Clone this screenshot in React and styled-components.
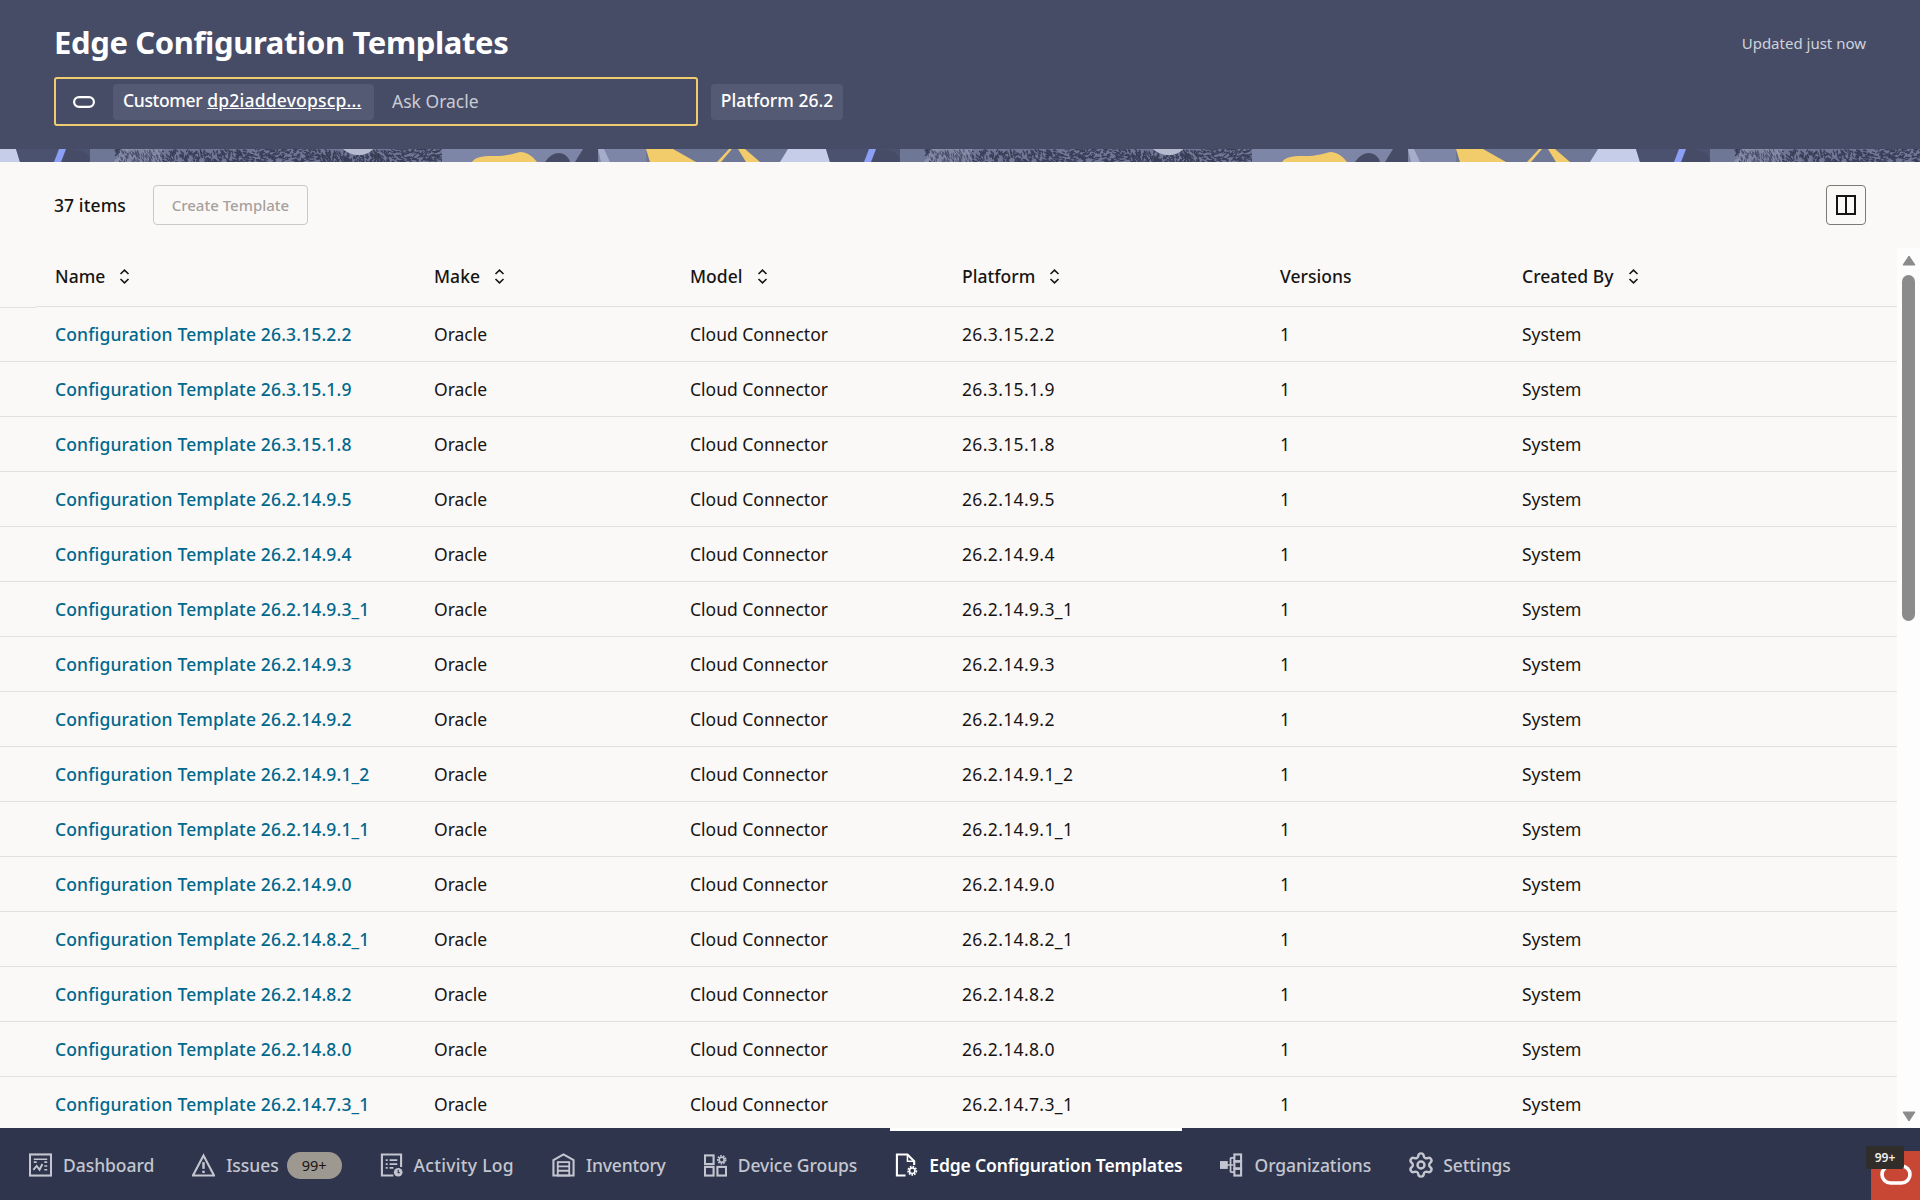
import React from "react";
import styled, { createGlobalStyle } from "styled-components";
import { Settings as SettingsIcon } from "lucide-react";

const Global = createGlobalStyle`
  html, body { margin: 0; padding: 0; height: 100%; overflow: hidden; }
  body { font-family: "Noto Sans", "Open Sans", sans-serif; color: #161513; background: #fbf9f8; }
  #root { height: 100%; }
`;

const Page = styled.div`
  height: 100vh;
  display: flex;
  flex-direction: column;
`;
const Header = styled.header`
  height: 149px;
  flex: none;
  background: #474c66;
  padding: 20px 54px 0;
  box-sizing: border-box;
  display: flex;
  justify-content: space-between;
  align-items: flex-start;
`;
const HeaderLeft = styled.div`
  display: flex;
  flex-direction: column;
  gap: 13px;
`;
const Title = styled.h1`
  margin: 0;
  font-size: 31px;
  line-height: 44px;
  font-weight: 700;
  color: #fff;
  letter-spacing: -0.38px;
`;
const Updated = styled.div`
  font-size: 15px;
  line-height: 46px;
  color: #d0d2dc;
`;
const SearchLine = styled.div`
  display: flex;
  align-items: center;
  gap: 13px;
`;
const SearchBox = styled.div`
  width: 644px;
  height: 49px;
  box-sizing: border-box;
  border: 2px solid #f0cc71;
  border-radius: 3px;
  display: flex;
  align-items: center;
  padding-left: 17px;
  color: #fff;
`;
const Chip = styled.div`
  height: 36px;
  background: #555a74;
  border-radius: 4px;
  display: flex;
  align-items: center;
  box-sizing: border-box;
  font-size: 17.5px;
  font-weight: 500;
  padding-bottom: 3px;
  color: #fff;
  white-space: nowrap;
`;
const CustomerChip = styled(Chip)`
  width: 261px;
  padding-left: 10px;
  margin-left: 18px;
  gap: 5px;
  letter-spacing: -0.35px;
`;
const PlatformChip = styled(Chip)`
  width: 132px;
  justify-content: center;
`;
const Under = styled.span`
  text-decoration: underline;
  letter-spacing: 0.2px;
`;
const Ask = styled.span`
  margin-left: 18px;
  font-size: 17.5px;
  padding-bottom: 1px;
  color: #c9cbd4;
`;
const StripSvg = styled.svg`
  display: block;
  flex: none;
  width: 100%;
  height: 13px;
`;
const Main = styled.main`
  flex: 1;
  min-height: 0;
  display: flex;
  flex-direction: column;
  background: #fbf9f8;
`;
const Toolbar = styled.div`
  height: 86px;
  flex: none;
  box-sizing: border-box;
  padding: 23px 54px;
  display: flex;
  align-items: center;
`;
const Count = styled.span`
  font-size: 17.5px;
  font-weight: 500;
  letter-spacing: 0.1px;
  color: #161513;
  margin-right: 27px;
  padding-bottom: 1px;
`;
const DisabledButton = styled.button`
  width: 155px;
  height: 40px;
  box-sizing: border-box;
  background: transparent;
  border: 1px solid #cbc8c5;
  border-radius: 4px;
  font: inherit;
  font-size: 15px;
  font-weight: 500;
  color: #a6a19c;
  padding: 0;
`;
const ColumnsButton = styled.button`
  margin-left: auto;
  width: 40px;
  height: 40px;
  box-sizing: border-box;
  background: transparent;
  border: 1px solid #7d7975;
  border-radius: 4px;
  padding: 0;
  display: flex;
  align-items: center;
  justify-content: center;
`;
const TableArea = styled.div`
  flex: 1;
  min-height: 0;
  display: flex;
`;
const Table = styled.div`
  flex: 1;
  overflow: hidden;
  min-width: 0;
`;
const cols = "434px 256px 272px 318px 242px 1fr";
const HeadRow = styled.div`
  position: relative;
  display: grid;
  grid-template-columns: ${cols};
  height: 59px;
  box-sizing: border-box;
  border-bottom: 1px solid #e3e1df;
  align-items: center;
  font-size: 17.5px;
  font-weight: 500;
  padding-bottom: 3px;
  &::before {
    content: "";
    position: absolute;
    left: 0;
    width: 36px;
    bottom: -1px;
    height: 1px;
    background: #fbf9f8;
  }
  &::after {
    content: "";
    position: absolute;
    left: 0;
    width: 36px;
    bottom: -2px;
    height: 1px;
    background: #e3e1df;
  }
`;
const HeadCell = styled.div`
  display: flex;
  align-items: center;
  gap: 14px;
  padding-left: ${p => (p.$first ? "55px" : "0")};
  letter-spacing: 0.05px;
  & > svg { position: relative; top: 1px; }
`;
const Row = styled.div`
  display: grid;
  grid-template-columns: ${cols};
  height: 55px;
  box-sizing: border-box;
  border-bottom: 1px solid #e3e1df;
  align-items: center;
  font-size: 17.5px;
`;
const Cell = styled.div`
  padding-left: ${p => (p.$first ? "55px" : "0")};
  white-space: nowrap;
`;
const Version = styled(Cell)`
  letter-spacing: 0.36px;
`;
const NameLink = styled.a`
  color: #00688c;
  font-weight: 500;
  letter-spacing: 0.15px;
  text-decoration: none;
`;
const ScrollTrack = styled.div`
  width: 23px;
  flex: none;
  background: #fdfdfd;
  display: flex;
  flex-direction: column;
  align-items: center;
  padding: 7px 0 6px;
  box-sizing: border-box;
`;
const Thumb = styled.div`
  width: 13px;
  height: 346px;
  margin: 9px 0 auto;
  border-radius: 7px;
  background: #8b8b8b;
`;
const Nav = styled.nav`
  position: relative;
  flex: none;
  height: 72px;
  background: #2f354c;
  display: flex;
  align-items: stretch;
  gap: 38px;
  padding-left: 29px;
  box-sizing: border-box;
`;
const NavItem = styled.div`
  position: relative;
  display: flex;
  align-items: center;
  gap: 11px;
  padding-top: 2px;
  font-size: 17.5px;
  font-weight: ${p => (p.$active ? 600 : 500)};
  letter-spacing: ${p => p.$tracking || "-0.06px"};
  color: ${p => (p.$active ? "#fff" : "#c3c6d0")};
  white-space: nowrap;
  ${p => p.$active && `
    &::before {
      content: "";
      position: absolute;
      left: -5px;
      right: 0;
      top: 0;
      height: 3px;
      background: #fff;
    }
  `}
`;
const Count99 = styled.span`
  width: 55px;
  height: 27px;
  margin-left: -3px;
  border-radius: 14px;
  background: #9e9990;
  color: #161513;
  font-size: 14.5px;
  font-weight: 400;
  display: flex;
  align-items: center;
  justify-content: center;
`;
const OracleCorner = styled.div`
  position: absolute;
  right: 0;
  bottom: 0;
  width: 49px;
  height: 49px;
  background: #c74634;
`;
const CornerBadge = styled.div`
  position: absolute;
  left: 1866px;
  top: 18px;
  width: 38px;
  height: 23px;
  border-radius: 3px;
  background: #312d2a;
  color: #f1efed;
  font-size: 12px;
  font-weight: 600;
  display: flex;
  align-items: center;
  justify-content: center;
`;
const CornerRing = styled.svg`
  position: absolute;
  left: 9px;
  top: 13px;
`;
const GearWrap = styled.span`
  display: flex;
  flex: none;
  width: 23px;
  justify-content: center;
`;

const Sort = () => (
  <svg width="11" height="15" viewBox="0 0 11 15" fill="none" stroke="#161513" strokeWidth="1.6">
    <path d="M1.5 5 5.5 1.2 9.5 5" />
    <path d="M1.5 10 5.5 13.8 9.5 10" />
  </svg>
);
const OracleMark = () => (
  <svg width="22" height="12" viewBox="0 0 22 12" fill="none" stroke="#fff" strokeWidth="2.2">
    <rect x="1.1" y="1.1" width="19.8" height="9.8" rx="4.9" />
  </svg>
);
const ColumnsIcon = () => (
  <svg width="20" height="20" viewBox="0 0 20 20" fill="none" stroke="#161513" strokeWidth="2">
    <rect x="1" y="1" width="18" height="18" />
    <path d="M10 1v18" />
  </svg>
);
const Arrow = ({ down }) => (
  <svg width="14" height="11" viewBox="0 0 14 11" fill="#8b8b8b" stroke="#8b8b8b" strokeWidth="1" strokeLinejoin="round">
    <path d={down ? "M1 1h12L7 10z" : "M7 1 13 10H1z"} />
  </svg>
);
const MiniGear = ({ cx, cy, r = 2.6 }) => (
  <g>
    <circle cx={cx} cy={cy} r={r + 1.4} fill="none" stroke="currentColor" strokeWidth="2" strokeDasharray="1.7 1.1" />
    <circle cx={cx} cy={cy} r={r} fill="none" stroke="currentColor" strokeWidth="1.6" />
  </g>
);
const Ico = ({ children }) => (
  <svg width="23" height="24" viewBox="0 0 24 24" fill="none" stroke="currentColor" strokeWidth="2.2" style={{ flex: "none" }}>
    {children}
  </svg>
);
const DashboardIcon = () => (
  <Ico>
    <rect x="1" y="1" width="22" height="22" />
    <path d="M5 6h14M5 9h3M16 9h3M16 13h3M16 17h3" strokeWidth="1.7" />
    <path d="M4.5 17 8 13l3 4 3-6" strokeWidth="2" />
  </Ico>
);
const IssuesIcon = () => (
  <Ico>
    <path d="M12 2 23 23H1z" strokeLinejoin="miter" />
    <path d="M12 9v7" strokeWidth="2.6" />
    <path d="M12 18v2.4" strokeWidth="2.6" />
  </Ico>
);
const ActivityIcon = () => (
  <Ico>
    <path d="M14 23H2V1h20v13" />
    <path d="M6 7h2M10 7h8M6 11h2M10 11h8M6 15h2M10 15h4" strokeWidth="1.9" />
    <circle cx="19" cy="19.5" r="4.5" fill="currentColor" stroke="none" />
    <path d="M19 17v3h1.6" stroke="#2f354c" strokeWidth="1.2" />
  </Ico>
);
const InventoryIcon = () => (
  <Ico>
    <path d="M1.5 7 12 1l10.5 6v16h-21z" />
    <rect x="6" y="9" width="12" height="14" strokeWidth="1.9" />
    <path d="M6 13.5h12M6 18h12" strokeWidth="1.9" />
  </Ico>
);
const GroupsIcon = () => (
  <Ico>
    <rect x="1" y="2" width="9" height="9" />
    <rect x="1" y="14" width="9" height="9" />
    <rect x="14" y="14" width="9" height="9" />
    <MiniGear cx={18.5} cy={6.5} />
  </Ico>
);
const EdgeIcon = () => (
  <Ico>
    <path d="M11 23H2V1h11l7 7v4" />
    <path d="M13 1v7h7" strokeWidth="1.6" />
    <MiniGear cx={18} cy={18} r={2.8} />
  </Ico>
);
const OrgIcon = () => (
  <Ico>
    <rect x="1" y="9" width="6" height="6" fill="currentColor" />
    <path d="M7 12h7M11 4.5v15M11 4.5h4M11 19.5h4" strokeWidth="1.8" />
    <rect x="15" y="1" width="7" height="7" />
    <rect x="15" y="8.5" width="7" height="7" />
    <rect x="15" y="16" width="7" height="7" />
  </Ico>
);

const rows = [
  "26.3.15.2.2", "26.3.15.1.9", "26.3.15.1.8", "26.2.14.9.5", "26.2.14.9.4",
  "26.2.14.9.3_1", "26.2.14.9.3", "26.2.14.9.2", "26.2.14.9.1_2", "26.2.14.9.1_1",
  "26.2.14.9.0", "26.2.14.8.2_1", "26.2.14.8.2", "26.2.14.8.0", "26.2.14.7.3_1",
];

const dashes = (() => {
  let s = 12345;
  const rnd = () => ((s = (s * 1103515245 + 12345) & 0x7fffffff) / 0x7fffffff);
  const out = [];
  for (let i = 0; i < 1000; i++) {
    const x = 114 + rnd() * 330;
    const y = rnd() * 13;
    const a = rnd() * 1.2 + Math.sin(x / 25);
    out.push(`M${x.toFixed(1)} ${y.toFixed(1)}l${(Math.cos(a) * 3.2).toFixed(1)} ${(Math.sin(a) * 3.2).toFixed(1)}`);
  }
  return out.join("");
})();
const lightDashes = (() => {
  let s = 777;
  const rnd = () => ((s = (s * 1103515245 + 12345) & 0x7fffffff) / 0x7fffffff);
  const out = [];
  for (let i = 0; i < 110; i++) {
    const x = 118 + rnd() * 44;
    const y = rnd() * 13;
    out.push(`M${x.toFixed(1)} ${y.toFixed(1)}l${(rnd() * 1.5).toFixed(1)} 3`);
  }
  return out.join("");
})();

const Strip = () => (
  <StripSvg viewBox="0 0 1920 13" preserveAspectRatio="none">
    <defs>
      <pattern id="tile" patternUnits="userSpaceOnUse" width="810" height="13">
        <rect width="810" height="13" fill="#6f7796" />
        <path d="M0 0h16l4 13H0zM788 0h22v13h-30z" fill="#c5cde8" />
        <path d="M16 0h74v13H20z" fill="#4a5270" />
        <path d="M66 0c18 0 24 5 24 13H62z" fill="#474c66" />
        <path d="M59 0h7l-5 13h-7z" fill="#8c9ef5" />
        <path d="M122 0h320v13H114z" fill="#6f7696" />
        <path d={dashes} stroke="#393e57" strokeWidth="1.2" fill="none" />
        <path d="M122 0h40v13h-48z" fill="#9096b2" opacity="0.8" />
        <path d={lightDashes} stroke="#474c66" strokeWidth="0.9" fill="none" />
        <path d="M343 0h30c-3 4-9 6-14 6s-12-2-16-6z" fill="#b6bbd0" />
        <path d="M442 0h204v13H442z" fill="#7d86a6" />
        <path d="M472 13c4-6 14-6 24-6 10 0 16-2 24-4 8 0 14 6 17 10z" fill="#f2cc6b" />
        <path d="M545 13c4-6 9-9 14-9s10 4 11 9z" fill="#474c66" />
        <path d="M583 0h15v13h-23z" fill="#474c66" />
        <path d="M598 0h6l6 13h-9z" fill="#a5adca" />
        <path d="M646 0h27l23 13h-46z" fill="#f2cc6b" />
        <path d="M729 0h3l-11 13h-4z" fill="#f2cc6b" />
        <path d="M738 0h7l15 13h-14z" fill="#f2cc6b" />
      </pattern>
    </defs>
    <rect width="1920" height="13" fill="url(#tile)" />
  </StripSvg>
);

export default function App() {
  return (
    <Page>
      <Global />
      <Header>
        <HeaderLeft>
          <Title>Edge Configuration Templates</Title>
          <SearchLine>
            <SearchBox>
              <OracleMark />
              <CustomerChip>Customer <Under>dp2iaddevopscp...</Under></CustomerChip>
              <Ask>Ask Oracle</Ask>
            </SearchBox>
            <PlatformChip>Platform 26.2</PlatformChip>
          </SearchLine>
        </HeaderLeft>
        <Updated>Updated just now</Updated>
      </Header>
      <Strip />
      <Main>
        <Toolbar>
          <Count>37 items</Count>
          <DisabledButton disabled>Create Template</DisabledButton>
          <ColumnsButton><ColumnsIcon /></ColumnsButton>
        </Toolbar>
        <TableArea>
          <Table>
            <HeadRow>
              <HeadCell $first>Name <Sort /></HeadCell>
              <HeadCell>Make <Sort /></HeadCell>
              <HeadCell>Model <Sort /></HeadCell>
              <HeadCell>Platform <Sort /></HeadCell>
              <HeadCell>Versions</HeadCell>
              <HeadCell>Created By <Sort /></HeadCell>
            </HeadRow>
            {rows.map(v => (
              <Row key={v}>
                <Cell $first><NameLink>Configuration Template {v}</NameLink></Cell>
                <Cell>Oracle</Cell>
                <Cell>Cloud Connector</Cell>
                <Version>{v}</Version>
                <Cell>1</Cell>
                <Cell>System</Cell>
              </Row>
            ))}
          </Table>
          <ScrollTrack>
            <Arrow />
            <Thumb />
            <Arrow down />
          </ScrollTrack>
        </TableArea>
      </Main>
      <Nav>
        <NavItem><DashboardIcon />Dashboard</NavItem>
        <NavItem><IssuesIcon />Issues<Count99>99+</Count99></NavItem>
        <NavItem $tracking="0.3px"><ActivityIcon />Activity Log</NavItem>
        <NavItem $tracking="-0.2px"><InventoryIcon />Inventory</NavItem>
        <NavItem><GroupsIcon />Device Groups</NavItem>
        <NavItem $active $tracking="-0.14px"><EdgeIcon />Edge Configuration Templates</NavItem>
        <NavItem $tracking="-0.06px"><OrgIcon />Organizations</NavItem>
        <NavItem><GearWrap><SettingsIcon size={28} strokeWidth={2.1} style={{ flex: "none", margin: "0 -3px" }} /></GearWrap>Settings</NavItem>
        <OracleCorner>
          <CornerRing width="32" height="21" viewBox="0 0 32 21" fill="none" stroke="#fff" strokeWidth="3.6">
            <rect x="2" y="2" width="28" height="17" rx="8.5" />
          </CornerRing>
        </OracleCorner>
        <CornerBadge>99+</CornerBadge>
      </Nav>
    </Page>
  );
}
